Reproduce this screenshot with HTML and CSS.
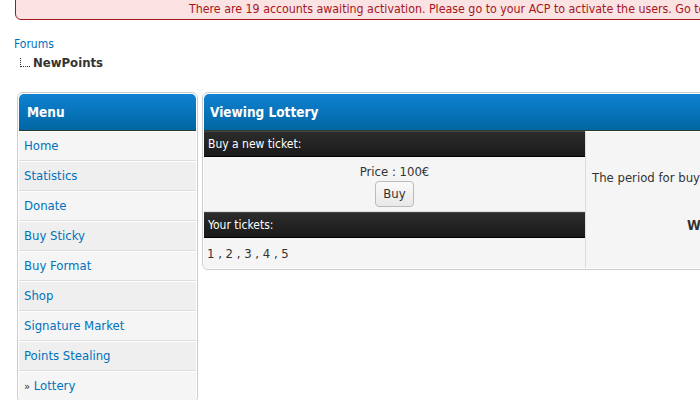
FILE: index.html
```html
<!DOCTYPE html>
<html>
<head>
<meta charset="utf-8">
<link rel="stylesheet" href="styles.css">
</head>
<body>
<div class="page">
  <div class="alert">There are 19 accounts awaiting activation. Please go to your ACP to activate the users. Go to the ACP.</div>

  <nav class="navigation">
    <a href="#" class="nav-link">Forums</a>
    <div class="nav-active">
      <span class="nav-sep"></span>
      <span class="nav-current">NewPoints</span>
    </div>
  </nav>

  <div class="layout">
    <div class="tborder menu">
      <div class="thead">Menu</div>
      <div class="trow trow1"><a href="#">Home</a></div>
      <div class="trow trow2"><a href="#">Statistics</a></div>
      <div class="trow trow1"><a href="#">Donate</a></div>
      <div class="trow trow2"><a href="#">Buy Sticky</a></div>
      <div class="trow trow1"><a href="#">Buy Format</a></div>
      <div class="trow trow2"><a href="#">Shop</a></div>
      <div class="trow trow1"><a href="#">Signature Market</a></div>
      <div class="trow trow2"><a href="#">Points Stealing</a></div>
      <div class="trow trow1"><span class="raquo">&raquo;</span> <a href="#">Lottery</a></div>
    </div>

    <div class="tborder main">
      <div class="thead">Viewing Lottery</div>
      <div class="lottery">
        <div class="lot-left">
          <div class="tcat">Buy a new ticket:</div>
          <div class="cell buy-cell">
            <div class="price">Price : 100&euro;</div>
            <button class="btn" type="button">Buy</button>
          </div>
          <div class="tcat">Your tickets:</div>
          <div class="cell tickets">1 , 2 , 3 , 4 , 5</div>
        </div>
        <div class="lot-right">
          <p class="period">The period for buying tickets for this lottery ends in 3 days.</p>
          <p class="winners">Winners</p>
        </div>
      </div>
    </div>
  </div>
</div>
</body>
</html>
```

FILE: styles.css
```css
html, body {
  margin: 0;
  padding: 0;
  background: #fff;
  overflow: hidden;
}
body {
  font-family: "DejaVu Sans Condensed", "DejaVu Sans", sans-serif;
  font-size: 13px;
  color: #333;
  width: 700px;
  height: 400px;
}
.page {
  width: 1300px;
}
a {
  color: #0072bc;
  text-decoration: none;
}
.alert {
  margin: -10px 0 0 15px;
  width: 1200px;
  height: 30px;
  box-sizing: border-box;
  background: #fbe3e4;
  border: 1px solid #a5161a;
  border-radius: 0 0 6px 6px;
  color: #a5161a;
  font-size: 12.3px;
  padding: 11px 0 0 173px;
  white-space: nowrap;
}
.navigation {
  padding: 17px 0 0 14px;
}
.nav-link {
  display: block;
  font-size: 12px;
  line-height: 15px;
}
.nav-active {
  display: flex;
  align-items: flex-end;
  margin-top: 2px;
}
.nav-sep {
  width: 10px;
  height: 9px;
  margin: 0 3px 5px 6px;
  border-left: 1px dotted #333;
  border-bottom: 1px dotted #333;
  box-sizing: border-box;
}
.nav-current {
  font-weight: bold;
  font-size: 13px;
  color: #333;
  line-height: 18px;
}
.layout {
  display: flex;
  align-items: flex-start;
  gap: 4px;
  margin: 20px 0 0 17px;
}
.tborder {
  background: #fff;
  border: 1px solid #ccc;
  border-radius: 6px;
  padding: 1px;
  overflow: hidden;
}
.menu {
  width: 177px;
}
.main {
  width: 900px;
}
.thead {
  background: linear-gradient(#0f82d2, #0066a2);
  color: #fff;
  font-weight: bold;
  font-size: 13.5px;
  padding: 10px 8px 9px;
  line-height: 17px;
  border-bottom: 1px solid #263c30;
  border-radius: 5px 5px 0 0;
}
.main .thead {
  padding-left: 6px;
}
.trow {
  padding: 6px 5px;
  line-height: 16px;
  border-top: 1px solid #fff;
  border-bottom: 1px solid #ddd;
  font-size: 13px;
}
.trow1 { background: #f5f5f5; }
.trow2 { background: #efefef; }
.trow:last-child { border-bottom: none; }
.raquo {
  color: #333;
  font-size: 11px;
}
.lottery {
  display: flex;
  align-items: stretch;
}
.lot-left {
  width: 381px;
  flex: none;
}
.lot-right {
  flex: 1;
  background: #f5f5f5;
  border-left: 1px solid #ddd;
  border-top: 1px solid #fff;
  padding: 38px 6px 0;
}
.tcat {
  background: linear-gradient(#2c2c2c, #1a1a1a);
  color: #fff;
  font-size: 12px;
  line-height: 16px;
  padding: 4px 4px;
  border-top: 1px solid #444;
  border-bottom: 1px solid #000;
}
.cell {
  background: #f5f5f5;
  border-bottom: 1px solid #ddd;
}
.buy-cell {
  text-align: center;
  padding: 7px 0 4px;
}
.price {
  line-height: 16px;
}
.btn {
  font-family: inherit;
  font-size: 13px;
  color: #333;
  background: linear-gradient(#fafafa, #e8e8e8);
  border: 1px solid #bbb;
  border-radius: 4px;
  padding: 4px 7px;
  margin-top: 1px;
  line-height: 16px;
}
.tickets {
  padding: 8px 3px 6px;
  line-height: 16px;
  border-bottom: none;
}
.period {
  margin: 0;
  line-height: 16px;
  white-space: nowrap;
}
.winners {
  margin: 31px 0 0 95px;
  font-weight: bold;
  font-size: 14px;
}
```
